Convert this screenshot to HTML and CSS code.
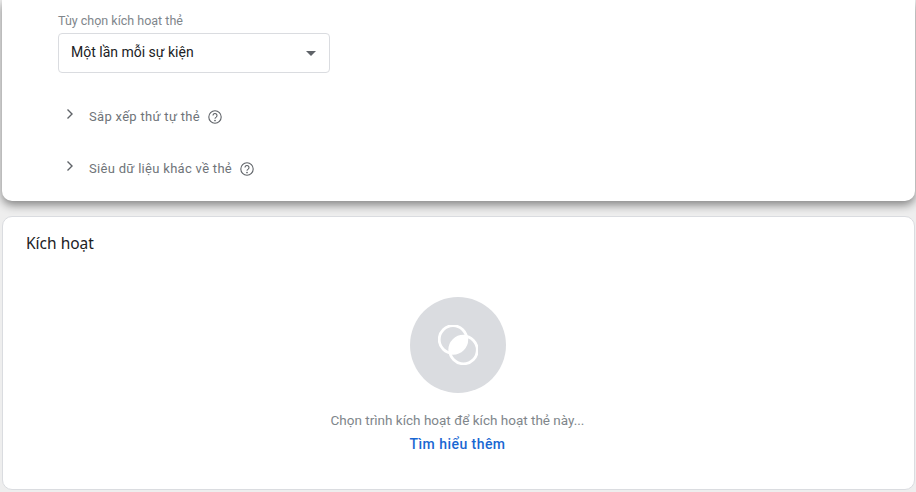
FILE: index.html
```html
<!DOCTYPE html>
<html lang="vi">
<head>
    <meta charset="UTF-8">
    <meta name="viewport" content="width=device-width, initial-scale=1.0">
    <title>Kích hoạt</title>
    <link rel="stylesheet" href="styles.css">
</head>
<body>
    <div class="page">
        <section class="card tag-card">
            <div class="field-label">Tùy chọn kích hoạt thẻ</div>
            <div class="select-box">
                <span>Một lần mỗi sự kiện</span>
                <i class="select-arrow"></i>
            </div>
            <div class="expand-row">
                <svg class="chevron" viewBox="0 0 8 12"><path d="M1.500 1.500 6 6l-4.500 4.500"/></svg>
                <span class="expand-title">Sắp xếp thứ tự thẻ</span>
                <svg class="help-icon" viewBox="0 0 14 14">
                    <circle cx="7" cy="7" r="6.200"/>
                    <path d="M5 5.500a2 2 0 1 1 3.200 1.600c-.8.500-1.200.9-1.200 1.700"/>
                    <circle class="help-dot" cx="7" cy="10.500" r=".85"/>
                </svg>
            </div>
            <div class="expand-row">
                <svg class="chevron" viewBox="0 0 8 12"><path d="M1.500 1.500 6 6l-4.500 4.500"/></svg>
                <span class="expand-title">Siêu dữ liệu khác về thẻ</span>
                <svg class="help-icon" viewBox="0 0 14 14">
                    <circle cx="7" cy="7" r="6.200"/>
                    <path d="M5 5.500a2 2 0 1 1 3.200 1.600c-.8.500-1.200.9-1.200 1.700"/>
                    <circle class="help-dot" cx="7" cy="10.500" r=".85"/>
                </svg>
            </div>
        </section>

        <section class="card trigger-card">
            <h3 class="card-title">Kích hoạt</h3>
            <div class="empty-state">
                <div class="empty-circle">
                    <svg class="trigger-icon" viewBox="0 0 40 40">
                        <clipPath id="overlapClip"><circle cx="15" cy="14.500" r="13.800"/></clipPath>
                        <circle class="overlap" cx="25.500" cy="25" r="13.800" clip-path="url(#overlapClip)"/>
                        <circle cx="15" cy="14.500" r="13.800"/>
                        <circle cx="25.500" cy="25" r="13.800"/>
                    </svg>
                </div>
                <p class="empty-text">Chọn trình kích hoạt để kích hoạt thẻ này...</p>
                <a class="learn-more">Tìm hiểu thêm</a>
            </div>
        </section>
    </div>
</body>
</html>
```

FILE: styles.css
```css
body {
    margin: 0;
    background: #eeeeee;
    font-family: Roboto, "Noto Sans", sans-serif;
}

.page {
    width: 916px;
    height: 492px;
    overflow: hidden;
    padding: 0 1px 0 2px;
    box-sizing: border-box;
}

.card {
    background: #fff;
    border-radius: 0 0 10px 10px;
}

.tag-card {
    height: 201px;
    box-sizing: border-box;
    padding: 14px 56px 0;
    box-shadow: 0 4px 10px rgba(0, 0, 0, 0.45);
    position: relative;
}

.field-label {
    font-size: 12.500px;
    line-height: 14px;
    color: #80868b;
    margin-bottom: 5px;
}

.select-box {
    width: 272px;
    height: 40px;
    box-sizing: border-box;
    border: 1px solid #dadce0;
    border-radius: 4px;
    padding: 0 13px 2px 12px;
    display: flex;
    align-items: center;
    justify-content: space-between;
    font-size: 14px;
    color: #202124;
    margin-bottom: 17px;
}

.select-arrow {
    width: 0;
    height: 0;
    border-left: 5px solid transparent;
    border-right: 5px solid transparent;
    border-top: 5px solid #5f6368;
    margin-top: 2px;
}

.expand-row {
    display: flex;
    align-items: center;
    height: 52px;
    padding-left: 8px;
    box-sizing: border-box;
}

.chevron {
    width: 8px;
    height: 12px;
    fill: none;
    stroke: #5f6368;
    stroke-width: 1.400;
    margin: -4px 15px 0 0;
}

.expand-title {
    font-size: 13px;
    font-weight: 400;
    letter-spacing: 0.3px;
    color: #6f7479;
    margin-right: 8px;
}

.help-icon {
    width: 14px;
    height: 14px;
    fill: none;
    stroke: #5f6368;
    stroke-width: 1.100;
    margin-top: 2px;
}

.help-dot {
    fill: #5f6368;
    stroke: none;
}

.trigger-card {
    height: 274px;
    margin-top: 15px;
    box-sizing: border-box;
    border: 1px solid #dadce0;
    border-radius: 10px;
    padding: 16px 23px 0;
}

.card-title {
    margin: 0;
    font-size: 15.500px;
    font-weight: 400;
    line-height: 20px;
    color: #202124;
    font-family: "Noto Sans", Roboto, sans-serif;
}

.empty-state {
    display: flex;
    flex-direction: column;
    align-items: center;
    margin: 44px 2px 0 0;
}

.empty-circle {
    width: 96px;
    height: 96px;
    border-radius: 50%;
    background: #dadce0;
    display: flex;
    align-items: center;
    justify-content: center;
}

.trigger-icon {
    width: 40px;
    height: 40px;
    fill: none;
    stroke: #fff;
    stroke-width: 2.800;
}

.trigger-icon .overlap {
    fill: #fff;
    stroke: none;
}

.empty-text {
    margin: 19px 0 0;
    font-size: 13.500px;
    line-height: 16px;
    color: #80868b;
}

.learn-more {
    margin-top: 8px;
    font-size: 14px;
    font-weight: 500;
    letter-spacing: 0.45px;
    line-height: 16px;
    color: #1967d2;
}
```
